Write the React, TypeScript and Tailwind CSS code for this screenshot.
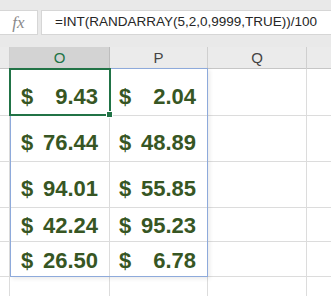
import React from "react";

type Row = { h: string; pb: string; o: string; p: string };

const ROWS: Row[] = [
  { h: "h-[47px]", pb: "pb-[7px]", o: "9.43", p: "2.04" },
  { h: "h-[46px]", pb: "pb-[7px]", o: "76.44", p: "48.89" },
  { h: "h-[46px]", pb: "pb-[7px]", o: "94.01", p: "55.85" },
  { h: "h-[34px]", pb: "pb-[4px]", o: "42.24", p: "95.23" },
  { h: "h-[35px]", pb: "pb-[4px]", o: "26.50", p: "6.78" },
];

const gridCols = "grid grid-cols-[10px_100px_98px_99px_1fr]";
const cell = "border-r border-b border-[#dcdcdc]";
const money = "flex items-end justify-between font-bold text-[22px] leading-[22px] text-[#375623]";

function Money({ v, pl }: { v: string; pl: string }) {
  return (
    <div className={`${money} ${pl} pr-[11px] h-full`}>
      <span>$</span>
      <span>{v}</span>
    </div>
  );
}

export default function App() {
  return (
    <div
      className="relative w-[331px] h-[296px] overflow-hidden bg-white"
      style={{ fontFamily: '"Liberation Sans", Arial, sans-serif' }}
    >
      {/* formula bar */}
      <div className="bg-[#e9e9e9] pt-[10px] pb-[12px]">
        <div className="flex h-[25px] gap-[3px]">
          <div className="w-[38px] bg-white border border-l-0 border-[#d6d6d6] flex items-center justify-center">
            <span
              className="italic text-[17px] text-[#8a8a8a] leading-none"
              style={{ fontFamily: '"Liberation Serif", serif' }}
            >
              fx
            </span>
          </div>
          <div className="flex-1 bg-white border border-r-0 border-[#d6d6d6] flex items-center pl-[13px] text-[13.5px] text-[#262626] whitespace-nowrap">
            =INT(RANDARRAY(5,2,0,9999,TRUE))/100
          </div>
        </div>
      </div>

      {/* column headers */}
      <div className={`${gridCols} h-[22px] bg-[#ebebeb] border-b border-[#c6c6c6] text-[15px]`}>
        <div className="border-r border-[#cfcfcf]" />
        <div className="bg-[#d3d3d3] border-r border-[#bdbdbd] flex items-center justify-center text-[#217346]">O</div>
        <div className="border-r border-[#cfcfcf] flex items-center justify-center text-[#444]">P</div>
        <div className="border-r border-[#cfcfcf] flex items-center justify-center text-[#444]">Q</div>
        <div />
      </div>

      {/* rows */}
      {ROWS.map((r, i) => (
        <div key={i} className={`${gridCols} ${r.h}`}>
          <div className={cell} />
          <div className={`${cell} ${r.pb}`}>
            <Money v={r.o} pl="pl-[11px]" />
          </div>
          <div className={`${cell} ${r.pb}`}>
            <Money v={r.p} pl="pl-[9px]" />
          </div>
          <div className={cell} />
          <div className="border-b border-[#dcdcdc]" />
        </div>
      ))}
      <div className={`${gridCols} h-[30px]`}>
        <div className="border-r border-[#dcdcdc]" />
        <div className="border-r border-[#dcdcdc]" />
        <div className="border-r border-[#dcdcdc]" />
        <div className="border-r border-[#dcdcdc]" />
        <div />
      </div>

      {/* spill range border */}
      <div className="absolute left-[10px] top-[68px] w-[198px] h-[209px] border border-[#8eaadb] shadow-[2px_2px_4px_rgba(0,0,0,0.08)] pointer-events-none" />

      {/* active cell */}
      <div className="absolute left-[9px] top-[68px] w-[102px] h-[48px] border-2 border-[#217346] pointer-events-none" />
      <div className="absolute left-[106px] top-[111px] w-[7px] h-[7px] bg-[#217346] border border-white" />
    </div>
  );
}
